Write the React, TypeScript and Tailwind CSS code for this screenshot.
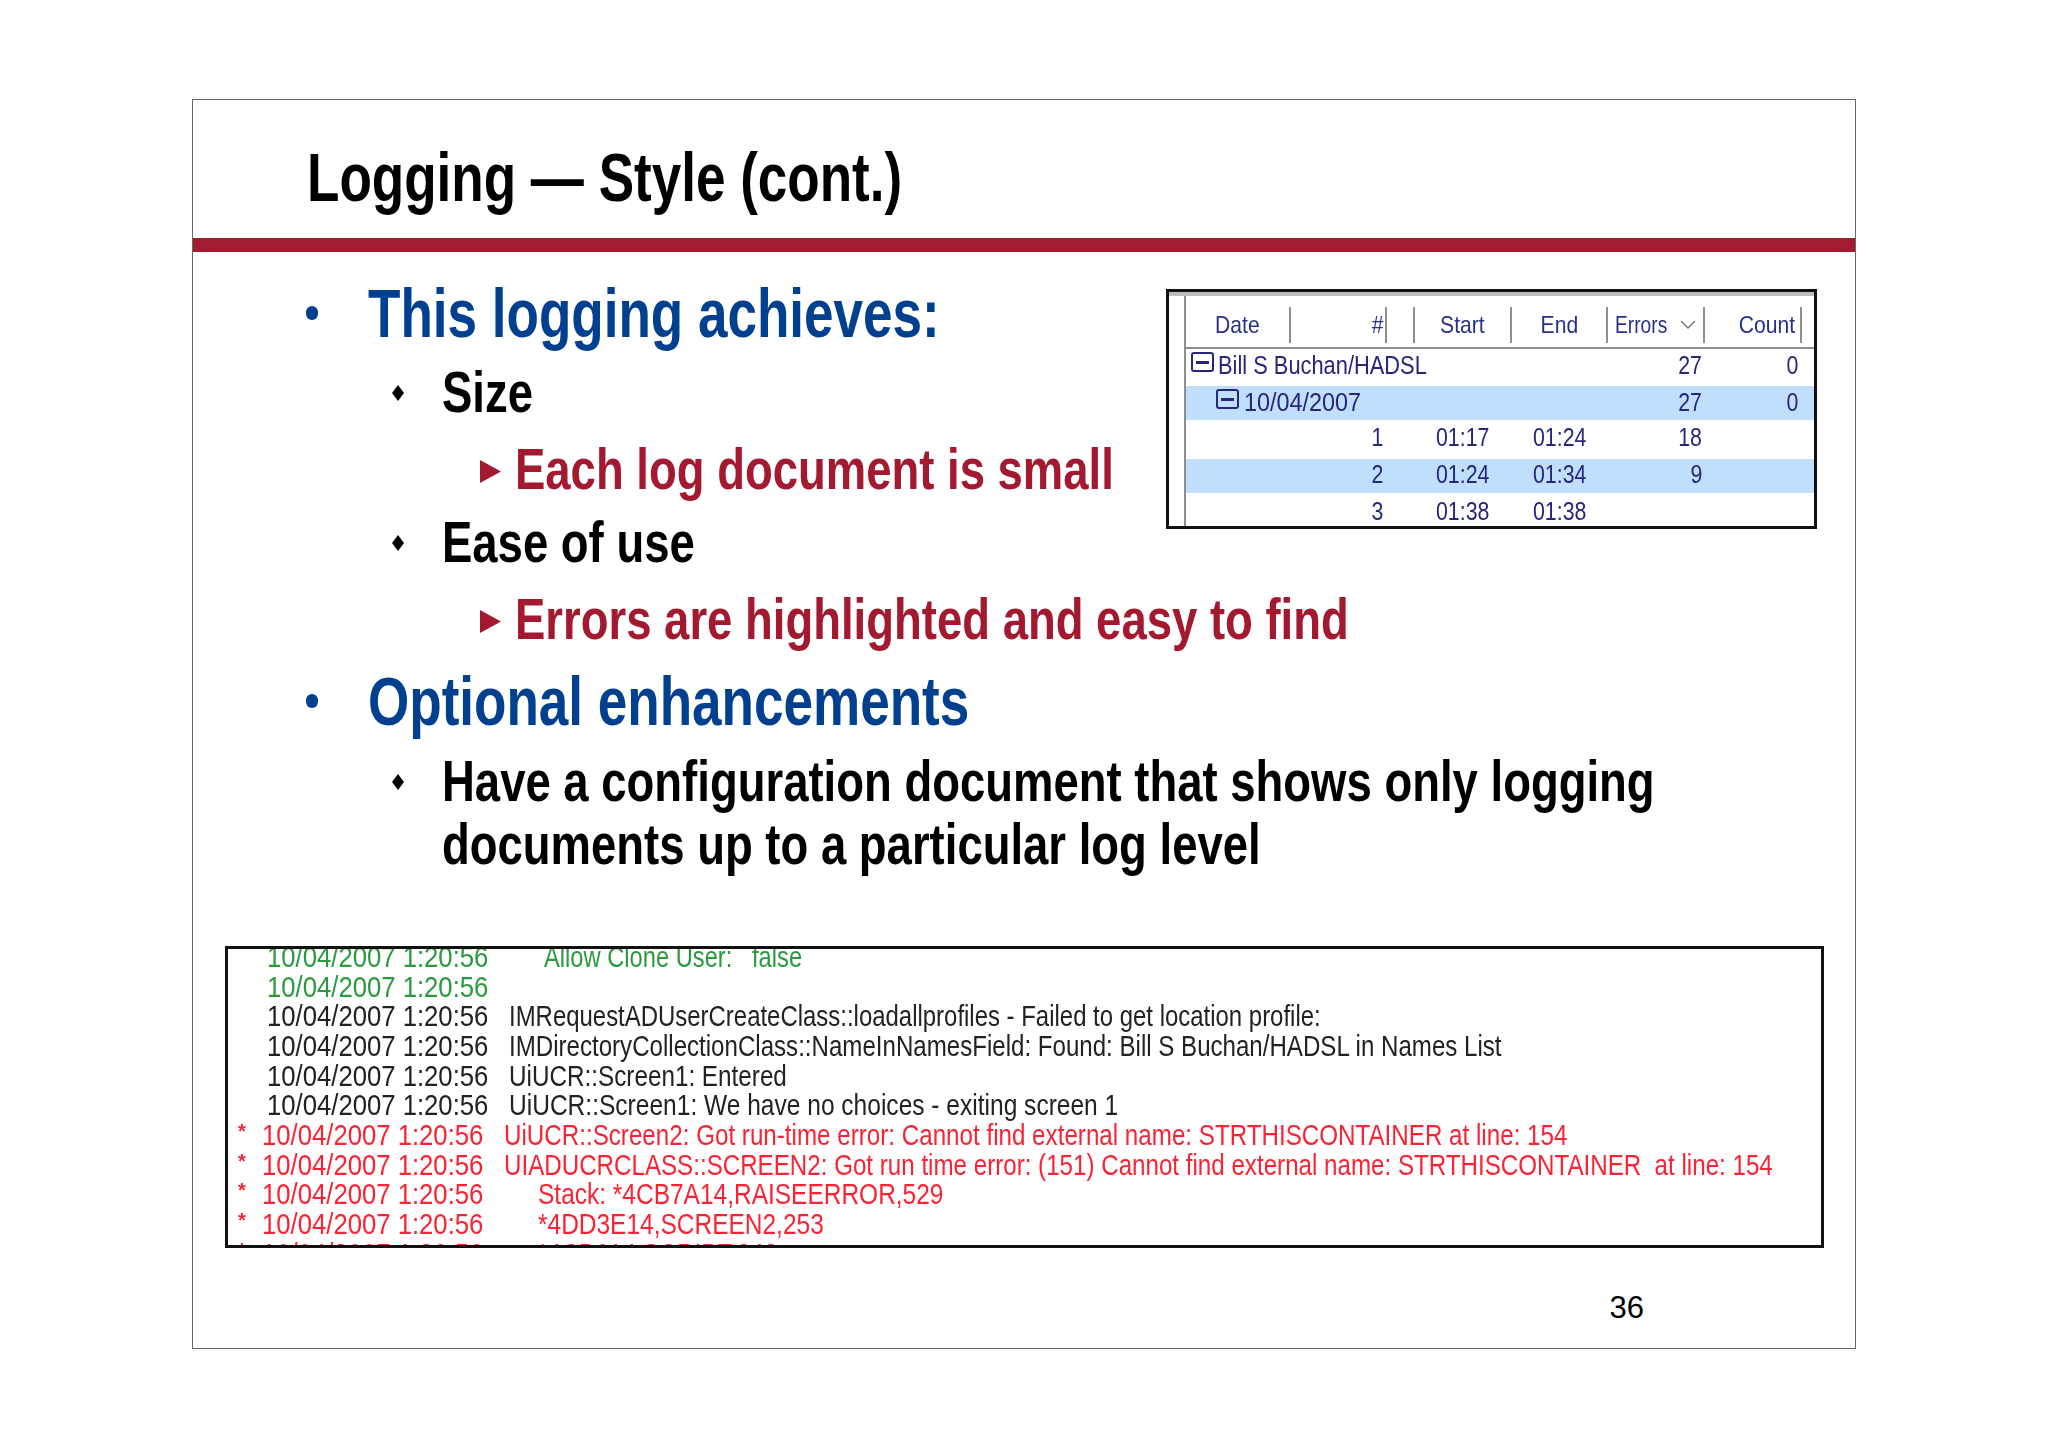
const SANS = "font-['Liberation_Sans',Arial,sans-serif]";

// the slide was stretched on its way to a screenshot, so all big text is squeezed
function Wide({ className = "", children }: { className?: string; children: React.ReactNode }) {
  return <span className={`block whitespace-nowrap origin-left ${className}`}>{children}</span>;
}

function Level1({ text, className = "" }: { text: string; className?: string }) {
  return (
    <div className={`flex pl-[113px] ${className}`}>
      <div className="w-[62px] shrink-0">
        <div className="w-[12px] h-[14px] mt-[27px] rounded-full bg-[#00408f]" />
      </div>
      <Wide className="scale-x-[0.78] text-[68px] leading-[68px] font-bold text-[#00408f]">{text}</Wide>
    </div>
  );
}

function Level2({ text, className = "" }: { text: string; className?: string }) {
  return (
    <div className={`flex pl-[199px] ${className}`}>
      <div className="w-[50px] shrink-0">
        <svg width="12" height="16" viewBox="0 0 12 16" className="mt-[22px]">
          <polygon points="6,0 12,8 6,16 0,8" fill="#000" />
        </svg>
      </div>
      <Wide className="scale-x-[0.784] text-[58px] leading-[58px] font-bold text-black">{text}</Wide>
    </div>
  );
}

function Level3({ text, className = "" }: { text: string; className?: string }) {
  return (
    <div className={`flex pl-[287px] ${className}`}>
      <div className="w-[35px] shrink-0">
        <svg width="21" height="23" viewBox="0 0 21 23" className="mt-[20px]">
          <polygon points="0,0 21,11.5 0,23" fill="#a3192f" />
        </svg>
      </div>
      <Wide className="scale-x-[0.784] text-[58px] leading-[58px] font-bold text-[#a3192f]">{text}</Wide>
    </div>
  );
}

const GRID = "grid grid-cols-[105px_96px_28px_97px_96px_97px_97px_1fr]";

function MinusBox({ className = "" }: { className?: string }) {
  return (
    <span className={`inline-flex items-center justify-center w-[23px] h-[20px] rounded-[3px] border-2 border-[#26267e] shrink-0 ${className}`}>
      <span className="block w-[13px] h-[3px] bg-[#26267e]" />
    </span>
  );
}

function Head({ label, className = "" }: { label: string; className?: string }) {
  return (
    <div className={`h-[36px] border-r-2 border-[#8f8f8f] flex items-center text-[24px] text-[#27308a] ${className}`}>
      <span className="block whitespace-nowrap scale-x-[0.88]">{label}</span>
    </div>
  );
}

type Row = { num?: string; start?: string; end?: string; errors?: string; count?: string; size: string; hi?: boolean; tree?: React.ReactNode };

const ROWS: Row[] = [
  {
    size: "h-[37px] pt-[2px]",
    errors: "27",
    count: "0",
    tree: (
      <div className="flex items-center pl-[5px]">
        <MinusBox className="-mt-[6px]" />
        <span className="block whitespace-nowrap origin-left scale-x-[0.84] ml-[4px]">Bill S Buchan/HADSL</span>
      </div>
    ),
  },
  {
    size: "h-[34px] pt-[2px]",
    hi: true,
    errors: "27",
    count: "0",
    tree: (
      <div className="flex items-center pl-[30px]">
        <MinusBox className="-mt-[6px]" />
        <span className="block whitespace-nowrap origin-left scale-x-[0.9] ml-[5px]">10/04/2007</span>
      </div>
    ),
  },
  { size: "h-[39px] pt-[3px]", num: "1", start: "01:17", end: "01:24", errors: "18" },
  { size: "h-[34px] pt-[1px]", hi: true, num: "2", start: "01:24", end: "01:34", errors: "9" },
  { size: "h-[34px] pt-[4px]", num: "3", start: "01:38", end: "01:38" },
];

function Right({ value, pad }: { value?: string; pad: string }) {
  return (
    <div className={`flex justify-end ${pad}`}>
      <span className="block whitespace-nowrap origin-right scale-x-[0.82]">{value}</span>
    </div>
  );
}

function Left({ value }: { value?: string }) {
  return (
    <div className="pl-[21px]">
      <span className="block whitespace-nowrap origin-left scale-x-[0.82]">{value}</span>
    </div>
  );
}

function StatsTable() {
  return (
    <div className="w-[651px] h-[240px] mt-[37px] shrink-0 border-[3px] border-[#111] bg-white overflow-hidden blur-[0.5px]">
      <div className="h-[4px] bg-[#bdbdbd]" />
      <div className="ml-[15px] border-l-2 border-[#8f8f8f]">
        <div className={`${GRID} pt-[11px] h-[51px]`}>
          <Head label="Date" className="justify-center" />
          <Head label="#" className="justify-end pr-[1px]" />
          <Head label="" />
          <Head label="Start" className="justify-center" />
          <Head label="End" className="justify-center" />
          <div className="h-[36px] border-r-2 border-[#8f8f8f] flex items-center justify-between pl-[7px] pr-[7px] text-[24px] text-[#27308a]">
            <span className="block whitespace-nowrap origin-left scale-x-[0.8]">Errors</span>
            <svg width="16" height="10" viewBox="0 0 16 10" className="shrink-0">
              <path d="M1 1 L8 8 L15 1" stroke="#7a7a7a" strokeWidth="1.5" fill="none" />
            </svg>
          </div>
          <Head label="Count" className="justify-end pr-[1px]" />
        </div>
        <div className="h-[2px] bg-[#8f8f8f]" />
        {ROWS.map((r, i) => (
          <div
            key={i}
            className={`${GRID} items-start text-[26px] leading-[28px] text-[#26267e] ${r.size} ${r.hi ? "bg-[#c0dffc]" : ""}`}
          >
            <div>{r.tree}</div>
            <Right value={r.num} pad="pr-[4px]" />
            <div />
            <Left value={r.start} />
            <Left value={r.end} />
            <Right value={r.errors} pad="pr-[3px]" />
            <Right value={r.count} pad="pr-[4px]" />
          </div>
        ))}
      </div>
    </div>
  );
}

type LogLine = { kind: "info" | "plain" | "error"; msg: string; fit: string; indent?: string; note?: string };

const LOG: LogLine[] = [
  { kind: "info", msg: "Allow Clone User:", fit: "scale-x-[0.79]", indent: "pl-[35px]", note: "false" },
  { kind: "info", msg: "", fit: "" },
  { kind: "plain", msg: "IMRequestADUserCreateClass::loadallprofiles - Failed to get location profile:", fit: "scale-x-[0.798]" },
  { kind: "plain", msg: "IMDirectoryCollectionClass::NameInNamesField: Found: Bill S Buchan/HADSL in Names List", fit: "scale-x-[0.803]" },
  { kind: "plain", msg: "UiUCR::Screen1: Entered", fit: "scale-x-[0.809]" },
  { kind: "plain", msg: "UiUCR::Screen1: We have no choices - exiting screen 1", fit: "scale-x-[0.818]" },
  { kind: "error", msg: "UiUCR::Screen2: Got run-time error: Cannot find external name: STRTHISCONTAINER at line: 154", fit: "scale-x-[0.806]" },
  { kind: "error", msg: "UIADUCRCLASS::SCREEN2: Got run time error: (151) Cannot find external name: STRTHISCONTAINER  at line: 154", fit: "scale-x-[0.805]" },
  { kind: "error", msg: "Stack: *4CB7A14,RAISEERROR,529", fit: "scale-x-[0.816]", indent: "pl-[34px]" },
  { kind: "error", msg: "*4DD3E14,SCREEN2,253", fit: "scale-x-[0.816]", indent: "pl-[34px]" },
  { kind: "error", msg: "*4CB614,SCRIPT,242", fit: "scale-x-[0.816]", indent: "pl-[34px]" },
];

function LogBox() {
  return (
    <div className="mt-[73px] ml-[32px] w-[1599px] h-[302px] border-[3px] border-[#111] overflow-hidden">
      <div className="-mt-[7px] blur-[0.5px]">
        {LOG.map((l, i) => {
          const tone = l.kind === "error" ? "text-[#fb2333]" : l.kind === "info" ? "text-[#2b9a3f]" : "text-[#222]";
          return (
            <div key={i} className={`flex h-[29.7px] items-center text-[30px] leading-[30px] whitespace-pre ${tone}`}>
              {l.kind === "error" ? (
                <span className="w-[34px] pl-[10px] shrink-0 -mt-[8px] text-[20px] font-bold">*</span>
              ) : (
                <span className="w-[39px] shrink-0" />
              )}
              <span className="block w-[242px] shrink-0 origin-left scale-x-[0.856]">10/04/2007 1:20:56</span>
              <div className={`flex ${l.indent ?? ""}`}>
                <span className={`block origin-left ${l.fit}`}>{l.msg}</span>
                {l.note && <span className="block absolute ml-[208px] origin-left scale-x-[0.79]">{l.note}</span>}
              </div>
            </div>
          );
        })}
      </div>
    </div>
  );
}

export default function App() {
  return (
    <div className={`w-[2048px] h-[1447px] overflow-hidden bg-white pt-[99px] pl-[192px] ${SANS}`}>
      <div className="w-[1664px] h-[1250px] border border-[#666] bg-white">
        <div className="pt-[43px] pl-[114px]">
          <Wide className="scale-x-[0.78] text-[68px] leading-[68px] font-bold text-black">Logging — Style (cont.)</Wide>
        </div>
        <div className="mt-[27px] h-[14px] bg-[#a31b2e]" />

        <div className="flex">
          <div className="w-[973px] shrink-0 pt-[27px]">
            <Level1 text="This logging achieves:" />
            <Level2 text="Size" className="mt-[16px]" />
            <Level3 text="Each log document is small" className="mt-[19px]" />
            <Level2 text="Ease of use" className="mt-[15px]" />
          </div>
          <StatsTable />
        </div>

        <Level3 text="Errors are highlighted and easy to find" className="mt-[19px]" />
        <Level1 text="Optional enhancements" className="mt-[19px]" />
        <Level2 text="Have a configuration document that shows only logging" className="mt-[17px]" />
        <div className="pl-[249px] mt-[5px]">
          <Wide className="scale-x-[0.784] text-[58px] leading-[58px] font-bold text-black">documents up to a particular log level</Wide>
        </div>

        <LogBox />

        <div className="mt-[44px] pr-[211px] text-right text-[31px] leading-[31px] text-black">36</div>
      </div>
    </div>
  );
}
